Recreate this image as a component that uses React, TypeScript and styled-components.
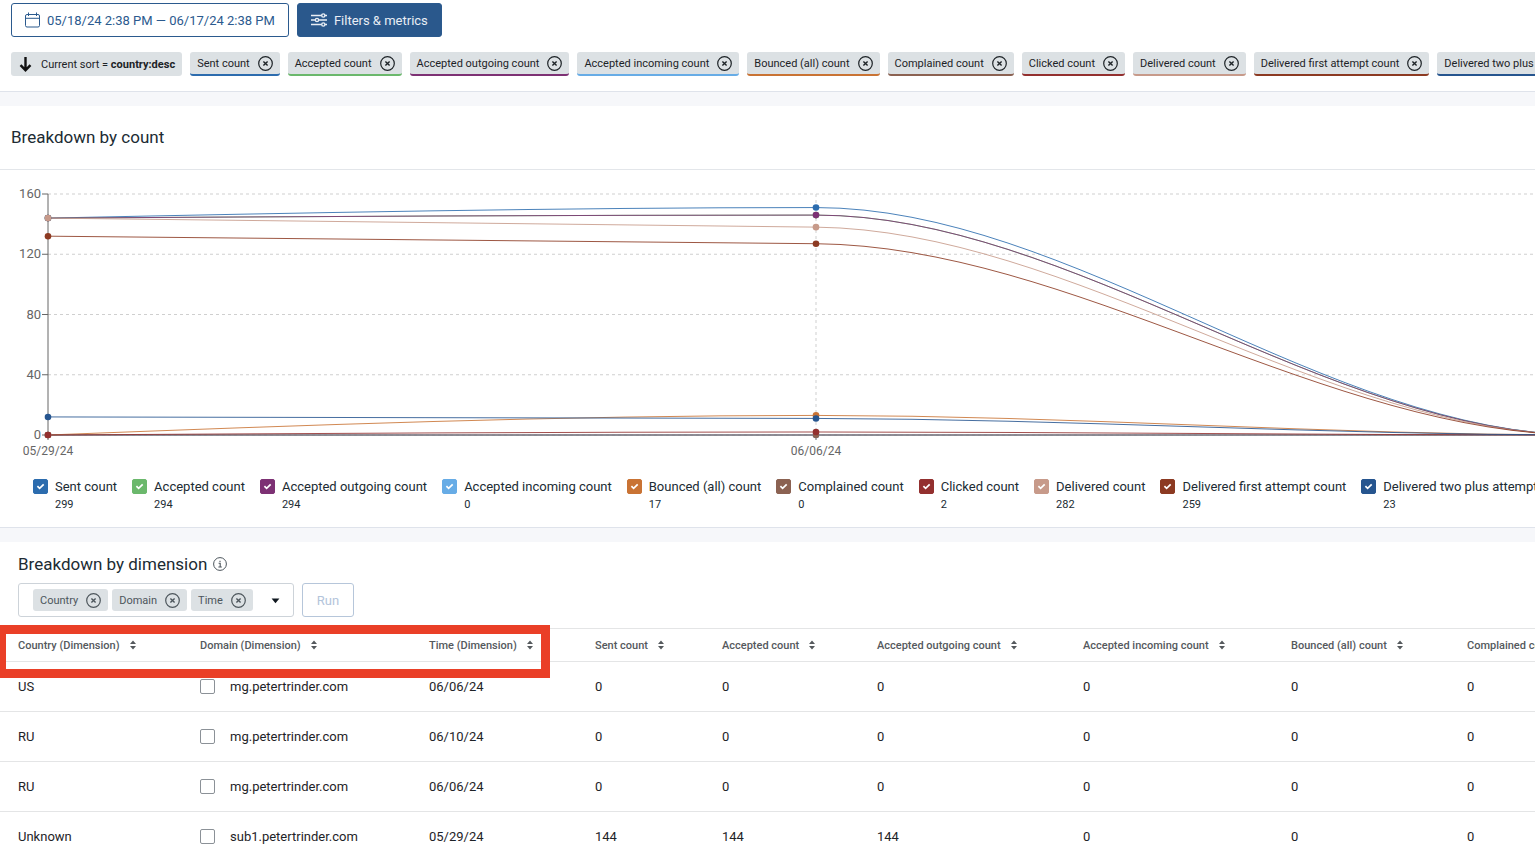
import React from "react";
import styled, { createGlobalStyle } from "styled-components";

const GlobalStyle = createGlobalStyle`
  *, *::before, *::after { box-sizing: border-box; }
  body {
    margin: 0;
    background: #f6f7fa;
    color: #202b33;
    font-family: Roboto, "Liberation Sans", sans-serif;
    font-size: 13px;
    overflow: hidden;
  }
  button, input { font-family: inherit; margin: 0; }
`;

const Page = styled.main`
  display: flex;
  flex-direction: column;
  gap: 14px;
  min-height: 100vh;
  overflow: hidden;
`;

const Panel = styled.section`
  background: #fff;
  border-bottom: 1px solid #dfe3eb;
`;

const Toolbar = styled(Panel)`
  padding: 3px 0 15px 11px;
`;

const ButtonRow = styled.div`
  display: flex;
  gap: 8px;
  margin-bottom: 15px;
`;

const BarButton = styled.button<{ $primary?: boolean }>`
  display: flex;
  align-items: center;
  gap: 7px;
  height: 34px;
  padding: 0 13px;
  border: 1px solid #2b5a8e;
  border-radius: 3px;
  background: ${(p) => (p.$primary ? "#2a588c" : "#fff")};
  color: ${(p) => (p.$primary ? "#e9eef5" : "#2b5a8e")};
  font-size: 13px;
  white-space: nowrap;
`;

const ChipRow = styled.div`
  display: flex;
  gap: 8px;
`;

const Chip = styled.div<{ $line?: string }>`
  display: flex;
  flex: none;
  align-items: center;
  gap: 8px;
  height: 24px;
  padding: 0 7px;
  border-radius: 3px;
  border-bottom: ${(p) => (p.$line ? `2px solid ${p.$line}` : "0")};
  background: #dce1e4;
  color: #1d2327;
  font-size: 11px;
  white-space: nowrap;
`;

const RemoveButton = styled.button`
  display: flex;
  padding: 0;
  border: 0;
  background: none;
  color: inherit;
`;

const Heading = styled.h2`
  display: flex;
  align-items: center;
  gap: 6px;
  margin: 0;
  font-size: 17px;
  font-weight: 400;
  line-height: 20px;
`;

const ChartHeader = styled.header`
  padding: 21px 11px 22px;
  border-bottom: 1px solid #e3e6ea;
`;

const Chart = styled.svg`
  display: block;
  width: 100%;
  height: 300px;
  font-size: 13px;
  fill: #666;
`;

const Legend = styled.ul`
  display: flex;
  gap: 15px;
  height: 57px;
  margin: 0;
  padding: 8px 0 0 33px;
  list-style: none;
`;

const LegendItem = styled.li`
  flex: none;
  display: grid;
  grid-template-columns: 15px auto;
  column-gap: 7px;
  align-content: start;
  white-space: nowrap;
`;

const LegendLabel = styled.label`
  font-size: 13px;
  line-height: 18px;
`;

const LegendTotal = styled.span`
  grid-column: 2;
  font-size: 11px;
  line-height: 18px;
`;

const Tick = styled.span`
  position: relative;
  display: block;
  height: 15px;
  margin-top: 1px;

  svg {
    position: absolute;
    inset: 0;
    pointer-events: none;
  }
`;

const Box = styled.input<{ $fill?: string }>`
  appearance: none;
  display: block;
  flex: none;
  width: 15px;
  height: 15px;
  border: 1px solid ${(p) => p.$fill ?? "#8b9197"};
  border-radius: 2px;
  background: ${(p) => p.$fill ?? "#fff"};
`;

const DimensionHeader = styled.header`
  padding: 12px 18px 11px;
`;

const Picker = styled.div`
  display: flex;
  gap: 8px;
  margin-top: 9px;
`;

const TagSelect = styled.div`
  display: flex;
  align-items: center;
  gap: 4px;
  height: 34px;
  padding: 0 10px 0 14px;
  border: 1px solid #cdd3d9;
  border-radius: 3px;
  color: #101820;
`;

const Tag = styled(Chip)`
  height: 22px;
  color: #4d565c;
`;

const CaretButton = styled.button`
  display: flex;
  margin-left: 11px;
  padding: 0;
  border: 0;
  background: none;
  color: inherit;
`;

const RunButton = styled.button`
  height: 34px;
  padding: 0 14px;
  border: 1px solid #b6c6da;
  border-radius: 3px;
  background: #fff;
  color: #b3c4db;
  font-size: 13px;
`;

const TableArea = styled.div`
  position: relative;
`;

const Table = styled.table`
  width: 100%;
  min-width: 1669px;
  table-layout: fixed;
  border-collapse: collapse;
  border-top: 1px solid #e4e5e6;

  th, td {
    padding: 0 0 0 18px;
    border-bottom: 1px solid #e4e5e6;
    text-align: left;
    white-space: nowrap;
  }
  th { height: 33px; }
  td { height: 50px; color: #1e2327; }
`;

const SortButton = styled.button`
  display: flex;
  align-items: center;
  gap: 9px;
  padding: 0;
  border: 0;
  background: none;
  color: #55595d;
  font-size: 11px;
  font-weight: 500;
`;

const DomainLabel = styled.label`
  display: flex;
  align-items: center;
  gap: 15px;
`;

/* Annotation frame drawn over the three dimension columns. */
const Highlight = styled.div`
  position: absolute;
  top: -3px;
  left: 0;
  width: 550px;
  height: 53px;
  border: 9px solid #ea3f27;
  border-left-width: 6px;
  pointer-events: none;
`;

const CloseIcon = () => (
  <svg width="15" height="15" viewBox="0 0 15 15" fill="none" stroke="currentColor" strokeWidth="1.2">
    <circle cx="7.5" cy="7.5" r="6.8" />
    <path d="M5.4 5.4l4.2 4.2M9.6 5.4l-4.2 4.2" strokeWidth="1.4" />
  </svg>
);

const SortIcon = () => (
  <svg width="8" height="10" viewBox="0 0 8 10" fill="currentColor">
    <path d="M4 0.4L7 3.9H1zM4 9.6L7 6.1H1z" />
  </svg>
);

interface Metric {
  name: string;
  color: string;
  total: number;
  values: [number, number, number];
}

const metrics: Metric[] = [
  { name: "Sent count", color: "#2c6cae", total: 299, values: [144, 151, 0] },
  { name: "Accepted count", color: "#6bb86c", total: 294, values: [144, 146, 0] },
  { name: "Accepted outgoing count", color: "#7d3174", total: 294, values: [144, 146, 0] },
  { name: "Accepted incoming count", color: "#67ace6", total: 0, values: [0, 0, 0] },
  { name: "Bounced (all) count", color: "#c97334", total: 17, values: [0, 13, 0] },
  { name: "Complained count", color: "#8b6252", total: 0, values: [0, 0, 0] },
  { name: "Clicked count", color: "#93302f", total: 2, values: [0, 2, 0] },
  { name: "Delivered count", color: "#c79a8a", total: 282, values: [144, 138, 0] },
  { name: "Delivered first attempt count", color: "#8c3a22", total: 259, values: [132, 127, 0] },
  { name: "Delivered two plus attempts count", color: "#26558f", total: 23, values: [12, 11, 0] },
];

const ORIGIN_X = 48;
const STEP_X = 768;
const BASE_Y = 265;
const yOf = (v: number) => BASE_Y - (v * 241) / 160;

/* Monotone cubic through three equally spaced points, flat at the last one. */
function curve(values: [number, number, number]) {
  const [a, b, c] = values.map(yOf);
  const s0 = b - a;
  const s1 = c - b;
  const mid = s0 * s1 > 0 ? Math.sign(s0) * Math.min(Math.abs(s0), Math.abs(s1)) : 0;
  const start = (3 * s0 - mid) / 2;
  const x1 = ORIGIN_X + STEP_X;
  const x2 = x1 + STEP_X;
  const third = STEP_X / 3;
  return (
    `M${ORIGIN_X} ${a}C${ORIGIN_X + third} ${a + start / 3} ${x1 - third} ${b - mid / 3} ${x1} ${b}` +
    `C${x1 + third} ${b + mid / 3} ${x2 - third} ${c} ${x2} ${c}`
  );
}

const ticks = [0, 40, 80, 120, 160];

const CountChart = () => (
  <Chart role="img" aria-label="Breakdown by count">
    <g stroke="#cfcfcf" strokeDasharray="3 3">
      {ticks.map((t) => (
        <line key={t} x1={ORIGIN_X} x2="100%" y1={yOf(t)} y2={yOf(t)} />
      ))}
      <line x1={ORIGIN_X + STEP_X} x2={ORIGIN_X + STEP_X} y1="24" y2={BASE_Y} />
    </g>
    <g stroke="#666">
      <line x1={ORIGIN_X} x2={ORIGIN_X} y1="24" y2="270" />
      <line x1={ORIGIN_X} x2="100%" y1={BASE_Y} y2={BASE_Y} />
      <line x1={ORIGIN_X + STEP_X} x2={ORIGIN_X + STEP_X} y1={BASE_Y} y2="270" />
      {ticks.map((t) => (
        <line key={t} x1="42" x2={ORIGIN_X} y1={yOf(t)} y2={yOf(t)} />
      ))}
    </g>
    {ticks.map((t) => (
      <text key={t} x="41" y={Math.round(yOf(t)) + 4} textAnchor="end">
        {t}
      </text>
    ))}
    <g fontSize="12" textAnchor="middle">
      <text x="48" y="285">05/29/24</text>
      <text x="816" y="285">06/06/24</text>
    </g>
    {metrics.map((m) => (
      <path key={m.name} d={curve(m.values)} fill="none" stroke={m.color} strokeOpacity="0.85" />
    ))}
    {metrics.map((m) => (
      <g key={m.name} fill={m.color}>
        <circle cx={ORIGIN_X} cy={yOf(m.values[0])} r="3.3" />
        <circle cx={ORIGIN_X + STEP_X} cy={yOf(m.values[1])} r="3.3" />
      </g>
    ))}
  </Chart>
);

const columns = [
  { name: "Country (Dimension)", width: 182 },
  { name: "Domain (Dimension)", width: 229 },
  { name: "Time (Dimension)", width: 166 },
  { name: "Sent count", width: 127 },
  { name: "Accepted count", width: 155 },
  { name: "Accepted outgoing count", width: 206 },
  { name: "Accepted incoming count", width: 208 },
  { name: "Bounced (all) count", width: 176 },
  { name: "Complained count", width: 220 },
];

const rows = [
  { country: "US", domain: "mg.petertrinder.com", time: "06/06/24", counts: [0, 0, 0, 0, 0, 0] },
  { country: "RU", domain: "mg.petertrinder.com", time: "06/10/24", counts: [0, 0, 0, 0, 0, 0] },
  { country: "RU", domain: "mg.petertrinder.com", time: "06/06/24", counts: [0, 0, 0, 0, 0, 0] },
  { country: "Unknown", domain: "sub1.petertrinder.com", time: "05/29/24", counts: [144, 144, 144, 0, 0, 0] },
];

export default function App() {
  return (
    <>
      <GlobalStyle />
      <Page>
        <Toolbar>
          <ButtonRow>
            <BarButton type="button">
              <svg width="15" height="16" viewBox="0 0 15 16" fill="none" stroke="currentColor">
                <rect x="0.5" y="2.5" width="14" height="12.5" rx="1.5" />
                <path d="M0.5 6.3h14M3.5 0.5v3.5M11.5 0.5v3.5" />
              </svg>
              05/18/24 2:38 PM — 06/17/24 2:38 PM
            </BarButton>
            <BarButton type="button" $primary>
              <svg width="16" height="14" viewBox="0 0 16 14" fill="none" stroke="currentColor" strokeWidth="1.4">
                <path d="M0 2.5h10.5M14 2.5h2M0 7h4M8 7h8M0 11.5h10.5M14 11.5h2" />
                <circle cx="12.3" cy="2.5" r="1.6" />
                <circle cx="6" cy="7" r="1.6" />
                <circle cx="12.3" cy="11.5" r="1.6" />
              </svg>
              Filters &amp; metrics
            </BarButton>
          </ButtonRow>
          <ChipRow>
            <Chip>
              <svg width="15" height="16" viewBox="0 0 15 16" fill="none" stroke="#111" strokeWidth="2.4">
                <path d="M7.5 1v13M2.5 9.2l5 5 5-5" />
              </svg>
              <span>
                Current sort = <b>country:desc</b>
              </span>
            </Chip>
            {metrics.map((m) => (
              <Chip key={m.name} $line={m.color}>
                {m.name}
                <RemoveButton type="button" aria-label={`Remove ${m.name}`}>
                  <CloseIcon />
                </RemoveButton>
              </Chip>
            ))}
          </ChipRow>
        </Toolbar>

        <Panel>
          <ChartHeader>
            <Heading>Breakdown by count</Heading>
          </ChartHeader>
          <CountChart />
          <Legend>
            {metrics.map((m, i) => (
              <LegendItem key={m.name}>
                <Tick>
                  <Box type="checkbox" id={`metric-${i}`} defaultChecked $fill={m.color} />
                  <svg width="15" height="15" viewBox="0 0 15 15" fill="none" stroke="#fff" strokeWidth="1.7">
                    <path d="M4.4 7.2l2.2 2.2 4.1-4.1" />
                  </svg>
                </Tick>
                <LegendLabel htmlFor={`metric-${i}`}>{m.name}</LegendLabel>
                <LegendTotal>{m.total}</LegendTotal>
              </LegendItem>
            ))}
          </Legend>
        </Panel>

        <Panel>
          <DimensionHeader>
            <Heading>
              Breakdown by dimension
              <svg width="14" height="14" viewBox="0 0 14 14" fill="none" stroke="#4c555c">
                <circle cx="7" cy="7" r="6.4" />
                <path d="M5.6 6.2h1.6v3.6M5.4 10h3.4M7 3.7v1.2" strokeWidth="1.1" />
              </svg>
            </Heading>
            <Picker>
              <TagSelect>
                {["Country", "Domain", "Time"].map((name) => (
                  <Tag key={name}>
                    {name}
                    <RemoveButton type="button" aria-label={`Remove ${name}`}>
                      <CloseIcon />
                    </RemoveButton>
                  </Tag>
                ))}
                <CaretButton type="button" aria-label="Choose dimensions">
                  <svg width="15" height="15" viewBox="0 0 15 15" fill="currentColor">
                    <path d="M3.6 5.6h7.8L7.5 10.2z" />
                  </svg>
                </CaretButton>
              </TagSelect>
              <RunButton type="button" disabled>
                Run
              </RunButton>
            </Picker>
          </DimensionHeader>
          <TableArea>
            <Table>
              <colgroup>
                {columns.map((c) => (
                  <col key={c.name} width={c.width} />
                ))}
              </colgroup>
              <thead>
                <tr>
                  {columns.map((c) => (
                    <th key={c.name} scope="col">
                      <SortButton type="button">
                        {c.name}
                        <SortIcon />
                      </SortButton>
                    </th>
                  ))}
                </tr>
              </thead>
              <tbody>
                {rows.map((r, i) => (
                  <tr key={i}>
                    <td>{r.country}</td>
                    <td>
                      <DomainLabel>
                        <Box type="checkbox" />
                        {r.domain}
                      </DomainLabel>
                    </td>
                    <td>{r.time}</td>
                    {r.counts.map((n, j) => (
                      <td key={j}>{n}</td>
                    ))}
                  </tr>
                ))}
              </tbody>
            </Table>
            <Highlight />
          </TableArea>
        </Panel>
      </Page>
    </>
  );
}
